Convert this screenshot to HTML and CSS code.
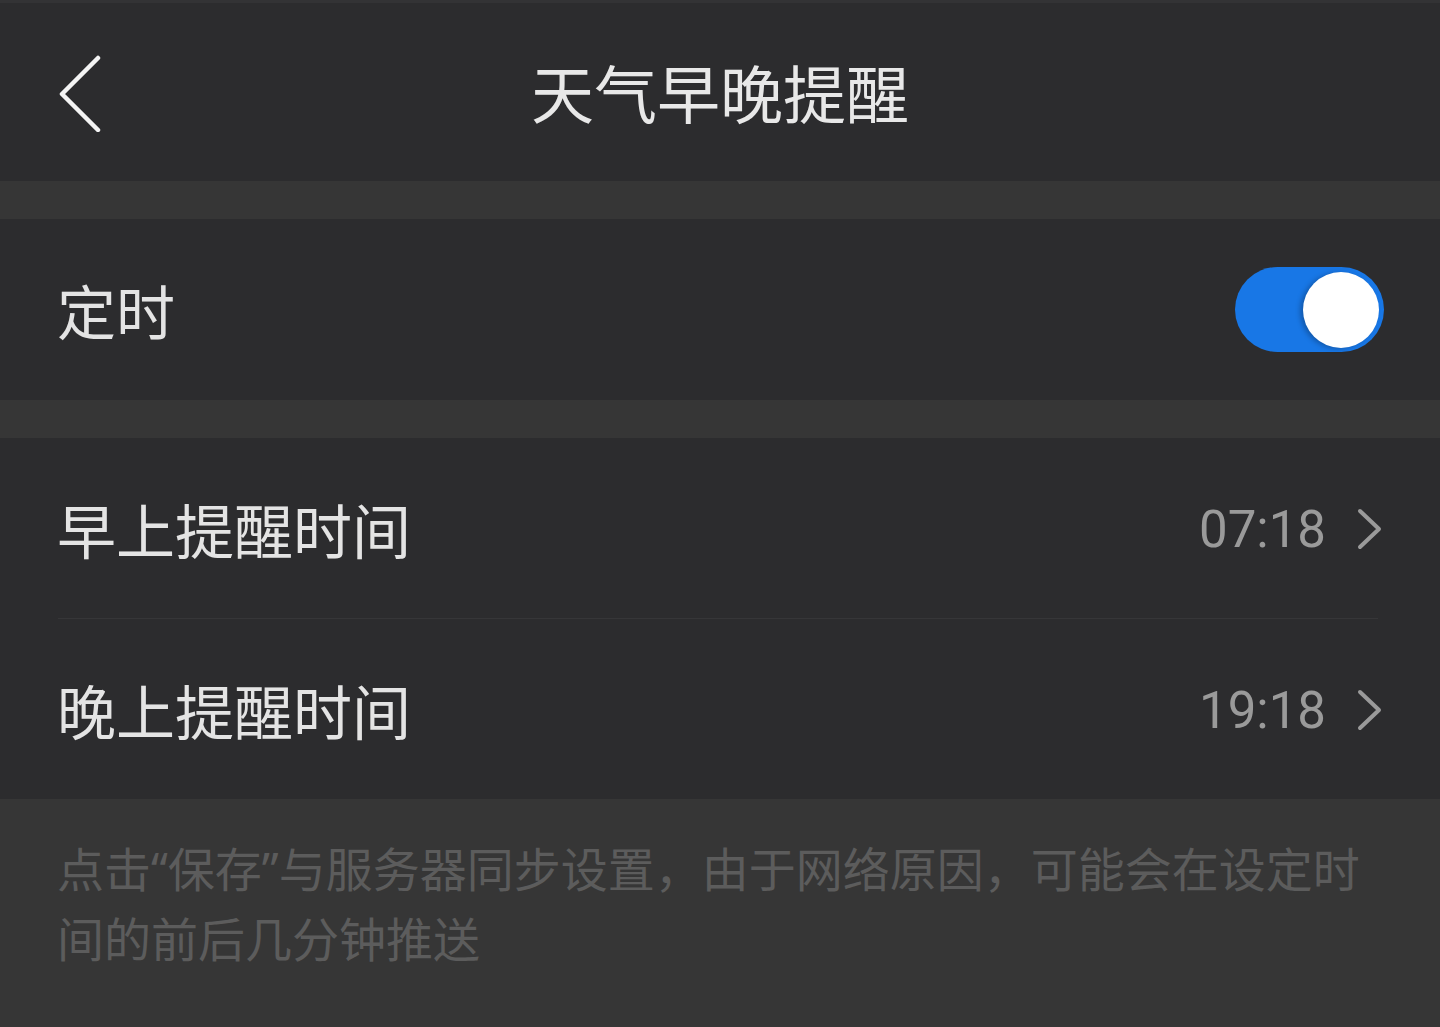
FILE: index.html
```html
<!DOCTYPE html>
<html lang="zh-CN">
<head>
    <meta charset="UTF-8">
    <meta name="viewport" content="width=device-width, initial-scale=1.0">
    <title>天气早晚提醒</title>
    <link rel="stylesheet" href="styles.css">
</head>
<body>
    <div class="page">
        <!-- 顶部标题栏 -->
        <header class="top-bar">
            <a class="back" href="#" aria-label="返回">
                <svg width="48" height="80" viewBox="0 0 48 80">
                    <path d="M40 6 L4 42 L40 78" fill="none" stroke="#f4f4f4" stroke-width="4.5" stroke-linecap="round" stroke-linejoin="round"/>
                </svg>
            </a>
            <h1 class="title">天气早晚提醒</h1>
            <div></div>
        </header>

        <div class="gap"></div>

        <!-- 定时开关 -->
        <div class="row">
            <span class="row-label">定时</span>
            <span class="switch on"><span class="knob"></span></span>
        </div>

        <div class="gap"></div>

        <!-- 提醒时间 -->
        <div class="group">
            <div class="row">
                <span class="row-label">早上提醒时间</span>
                <span class="row-value">
                    <span class="time">07:18</span>
                    <svg class="arrow" width="28" height="42" viewBox="0 0 28 42">
                        <path d="M4 3 L23 21 L4 39" fill="none" stroke="#9a9a9a" stroke-width="4" stroke-linecap="round" stroke-linejoin="round"/>
                    </svg>
                </span>
            </div>
            <div class="divider"></div>
            <div class="row">
                <span class="row-label">晚上提醒时间</span>
                <span class="row-value">
                    <span class="time">19:18</span>
                    <svg class="arrow" width="28" height="42" viewBox="0 0 28 42">
                        <path d="M4 3 L23 21 L4 39" fill="none" stroke="#9a9a9a" stroke-width="4" stroke-linecap="round" stroke-linejoin="round"/>
                    </svg>
                </span>
            </div>
        </div>

        <!-- 说明 -->
        <p class="note">点击“保存”与服务器同步设置，由于网络原因，可能会在设定时间的前后几分钟推送</p>
    </div>
</body>
</html>
```

FILE: styles.css
```css
body {
    margin: 0;
    padding: 0;
    background-color: #363636;
    font-family: "Noto Sans CJK SC", "Noto Sans", sans-serif;
}

.page {
    width: 1440px;
    min-height: 1027px;
    display: flex;
    flex-direction: column;
    background-color: #363636;
}

.top-bar {
    height: 181px;
    display: grid;
    grid-template-columns: 1fr auto 1fr;
    align-items: center;
    background-color: #2c2c2e;
    border-top: 3px solid #333335;
    box-sizing: border-box;
}

.back {
    display: flex;
    align-items: center;
    padding-left: 58px;
}

.title {
    margin: 0 0 4px;
    font-size: 63px;
    font-weight: 400;
    color: #e8e8e8;
}

.gap {
    height: 38px;
    background-color: #363636;
}

.row {
    height: 181px;
    padding: 0 56px 0 57px;
    display: flex;
    align-items: center;
    justify-content: space-between;
    background-color: #2c2c2e;
}

.group {
    background-color: #2c2c2e;
}

.group .row {
    height: 180px;
}

.row-label {
    font-size: 59px;
    color: #e4e4e4;
}

.switch {
    width: 149px;
    height: 85px;
    border-radius: 43px;
    background-color: #1877e6;
    display: flex;
    align-items: center;
    justify-content: flex-end;
    padding-right: 5px;
    box-sizing: border-box;
}

.knob {
    width: 76px;
    height: 76px;
    border-radius: 50%;
    background-color: #ffffff;
    box-shadow: -3px 1px 5px rgba(0, 0, 0, 0.25);
}

.row-value {
    display: flex;
    align-items: center;
    gap: 30px;
}

.time {
    font-family: Roboto, "Noto Sans", sans-serif;
    font-size: 51px;
    color: #9a9a9a;
    margin-top: 3px;
}

.arrow {
    margin-top: 2px;
}

.divider {
    height: 1px;
    margin: 0 62px 0 58px;
    background-color: #363638;
}

.note {
    margin: 0;
    padding: 35px 60px 40px 57px;
    font-family: "Noto Sans", "Noto Sans CJK SC", sans-serif;
    font-size: 47px;
    line-height: 70px;
    color: #5c5c5c;
}
```
